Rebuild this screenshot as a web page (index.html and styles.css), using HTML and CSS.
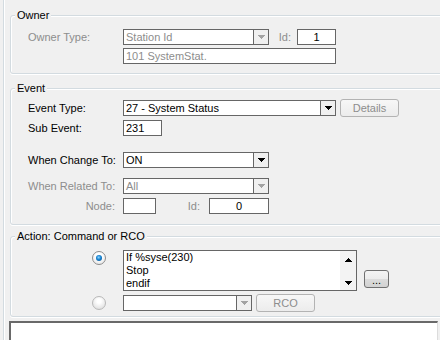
FILE: index.html
```html
<!DOCTYPE html>
<html lang="en">
<head>
    <meta charset="UTF-8">
    <title>Event Action</title>
    <link rel="stylesheet" href="styles.css">
</head>
<body>
    <div class="frame">
        <div class="group owner">
            <span class="legend">Owner</span>
            <div class="row">
                <span class="lbl dim">Owner Type:</span>
                <div class="box combo w146 dim"><span>Station Id</span><i class="drop"><svg width="7" height="4"><path d="M0 0h7v1h-1v1h-1v1h-1v1h-1v-1h-1v-1h-1v-1h-1z" fill="#a3a3a3"/></svg></i></div>
                <span class="lbl-r owner-id dim">Id:</span>
                <div class="box w39 center">1</div>
            </div>
            <div class="row gap3">
                <span class="lbl"></span>
                <div class="box w213 dim">101 SystemStat.</div>
            </div>
        </div>

        <div class="group event">
            <span class="legend">Event</span>
            <div class="row tall">
                <span class="lbl">Event Type:</span>
                <div class="box combo w213"><span>27 - System Status</span><i class="drop"><svg width="7" height="4"><path d="M0 0h7v1h-1v1h-1v1h-1v1h-1v-1h-1v-1h-1v-1h-1z" fill="#000"/></svg></i></div>
                <div class="btn details">Details</div>
            </div>
            <div class="row gap3">
                <span class="lbl">Sub Event:</span>
                <div class="box w39">231</div>
            </div>
            <div class="row gap16">
                <span class="lbl">When Change To:</span>
                <div class="box combo w146"><span>ON</span><i class="drop"><svg width="7" height="4"><path d="M0 0h7v1h-1v1h-1v1h-1v1h-1v-1h-1v-1h-1v-1h-1z" fill="#000"/></svg></i></div>
            </div>
            <div class="row gap10">
                <span class="lbl dim">When Related To:</span>
                <div class="box combo w146 dim"><span>All</span><i class="drop"><svg width="7" height="4"><path d="M0 0h7v1h-1v1h-1v1h-1v1h-1v-1h-1v-1h-1v-1h-1z" fill="#a3a3a3"/></svg></i></div>
            </div>
            <div class="row gap4">
                <span class="lbl right dim">Node:</span>
                <div class="box w33"></div>
                <span class="lbl-r node-id dim">Id:</span>
                <div class="box w60 center">0</div>
            </div>
        </div>

        <div class="group action">
            <span class="legend">Action: Command or RCO</span>
            <div class="row top">
                <span class="lbl radio-cell"><i class="radio on"></i></span>
                <div class="memo">
                    <div class="lines">If %syse(230)<br>Stop<br>endif</div>
                    <div class="sb">
                        <svg width="7" height="4"><path d="M3 0h1v1h1v1h1v1h1v1h-7v-1h1v-1h1v-1h1z" fill="#000"/></svg>
                        <svg width="7" height="4"><path d="M0 0h7v1h-1v1h-1v1h-1v1h-1v-1h-1v-1h-1v-1h-1z" fill="#000"/></svg>
                    </div>
                </div>
                <div class="btn on more">...</div>
            </div>
            <div class="row tall gap3">
                <span class="lbl radio-cell"><i class="radio"></i></span>
                <div class="box combo w129"><span></span><i class="drop"><svg width="7" height="4"><path d="M0 0h7v1h-1v1h-1v1h-1v1h-1v-1h-1v-1h-1v-1h-1z" fill="#a3a3a3"/></svg></i></div>
                <div class="btn rco">RCO</div>
            </div>
        </div>

        <div class="log"></div>
    </div>
</body>
</html>
```
FILE: styles.css
```css
body, html{
    margin: 0;
    padding: 0;
    width: 440px;
    height: 340px;
    overflow: hidden;
    background-color: #F0F0F0;
    font-family: "Liberation Sans", Arial, sans-serif;
    font-size: 11px;
    line-height: 13px;
    color: #000;
}
.frame{
    margin-left: 3px;
    height: 340px;
    padding-left: 6px;
    border-left: 1px solid #d3dbe0;
    box-shadow: inset 1px 0 #fff;
    overflow: hidden;
}
.group{
    position: relative;
    width: 480px;
    border: 1px solid #d3dbe0;
    border-radius: 3px;
    box-shadow: inset 1px 1px #fff, 0 1px #fff;
    padding-left: 17px;
}
.legend{
    position: absolute;
    top: -7px;
    left: 4px;
    padding: 0 2px;
    background-color: #F0F0F0;
}
.owner{
    margin-top: 15px;
    padding-top: 13px;
    padding-bottom: 9px;
}
.event{
    margin-top: 14px;
    padding-top: 10px;
    padding-bottom: 10px;
}
.action{
    margin-top: 11px;
    padding-top: 13px;
    padding-bottom: 4px;
}
.row{
    display: flex;
    align-items: center;
    height: 16px;
}
.row.tall{
    height: 18px;
}
.row.top{
    height: 41px;
    align-items: flex-start;
}
.gap3{ margin-top: 3px; }
.gap4{ margin-top: 4px; }
.gap10{ margin-top: 10px; }
.gap16{ margin-top: 16px; }
.lbl{
    width: 95px;
    flex-shrink: 0;
}
.lbl.right{
    text-align: right;
    padding-right: 8px;
    width: 87px;
}
.lbl-r{
    text-align: right;
    flex-shrink: 0;
}
.owner-id{
    width: 22px;
    padding-right: 6px;
}
.node-id{
    width: 44px;
    padding-right: 9px;
}
.dim{
    color: #8d8d8d;
}
.box{
    box-sizing: border-box;
    height: 16px;
    border: 1px solid #666;
    background-color: #fff;
    padding: 0 2px;
    line-height: 14px;
    white-space: nowrap;
}
.center{ text-align: center; }
.w33{ width: 33px; }
.w39{ width: 39px; }
.w60{ width: 60px; }
.w129{ width: 129px; }
.w146{ width: 146px; }
.w213{ width: 213px; }
.combo{
    display: flex;
    padding: 0;
}
.combo span{
    flex: 1;
    padding-left: 2px;
}
.drop{
    width: 14px;
    border-left: 1px solid #666;
    background-color: #F0F0F0;
    display: flex;
    align-items: center;
    justify-content: center;
}
.btn{
    box-sizing: border-box;
    height: 18px;
    border: 1px solid #b3b3b3;
    border-radius: 3px;
    background: linear-gradient(#f7f7f7, #ececec);
    color: #8d8d8d;
    text-align: center;
    line-height: 16px;
}
.btn.on{
    border-color: #707070;
    color: #000;
    background: linear-gradient(#f4f4f4 0%, #ececec 50%, #dcdcdc 51%, #d2d2d2 100%);
}
.details{
    width: 59px;
    margin-left: 4px;
}
.rco{
    width: 59px;
    margin-left: 4px;
}
.more{
    width: 25px;
    margin-left: 7px;
    align-self: flex-end;
    margin-bottom: 3px;
    line-height: 18px;
}
.radio-cell{
    display: flex;
    justify-content: flex-end;
    box-sizing: border-box;
    padding-right: 17px;
}
.row.top .radio-cell{
    padding-top: 1px;
}
.radio{
    position: relative;
    box-sizing: border-box;
    width: 14px;
    height: 14px;
    border-radius: 50%;
    border: 1px solid #b8b8b8;
    background: radial-gradient(circle at 50% 35%, #ffffff 20%, #d9d9d9 95%);
}
.radio.on{
    border-color: #8c8c8c;
    background: radial-gradient(circle at 50% 35%, #ffffff 30%, #e4e4e4 90%);
}
.radio.on::after{
    content: "";
    position: absolute;
    left: 3px;
    top: 3px;
    width: 6px;
    height: 6px;
    border-radius: 50%;
    background: radial-gradient(circle at 45% 40%, #8ed6ff 0%, #1782d0 45%, #064a86 100%);
}
.memo{
    box-sizing: border-box;
    width: 234px;
    height: 41px;
    border: 1px solid #666;
    background-color: #fff;
    display: flex;
}
.lines{
    flex: 1;
    padding: 0 2px;
    line-height: 13px;
}
.sb{
    width: 16px;
    background-color: #f3f3f3;
    display: flex;
    flex-direction: column;
    align-items: center;
    justify-content: space-between;
    padding: 7px 0 5px;
    box-sizing: border-box;
}
.log{
    margin-top: 4px;
    margin-left: -1px;
    width: 426px;
    height: 40px;
    background-color: #fff;
    border-top: 2px solid #696969;
    border-left: 2px solid #696969;
    border-right: 1px solid #dcdcdc;
}
```
